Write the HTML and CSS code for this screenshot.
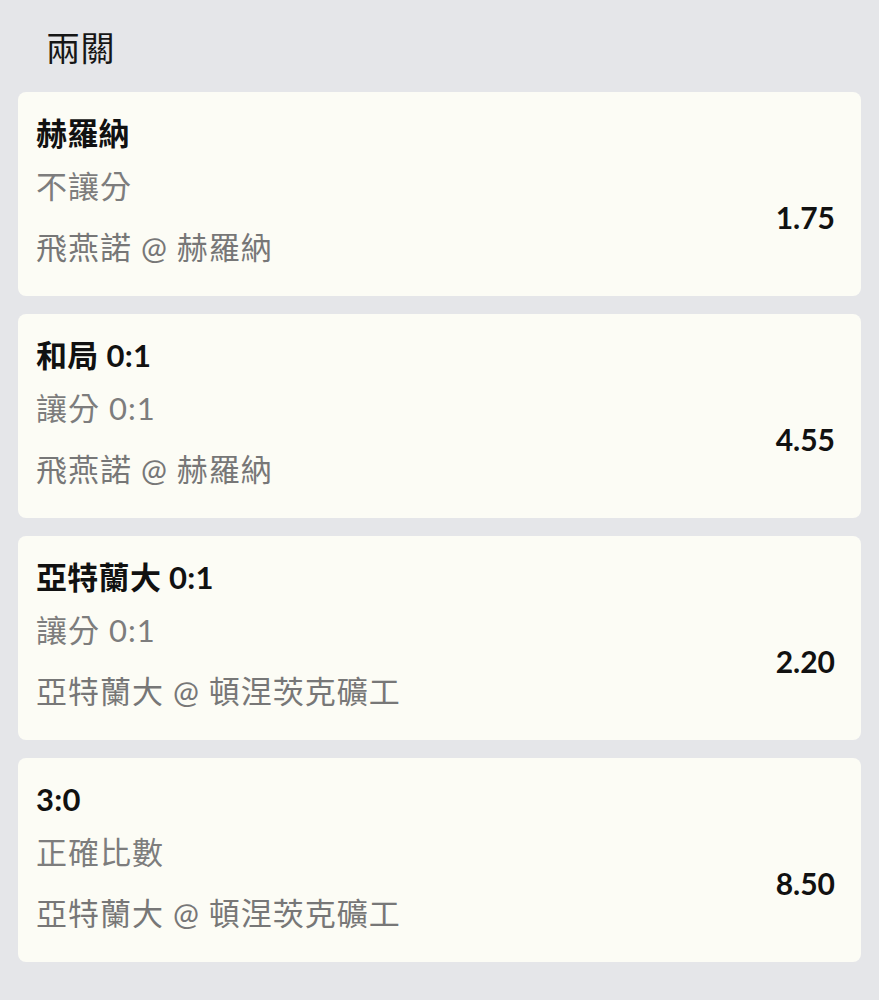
FILE: index.html
```html
<!DOCTYPE html>
<html lang="zh-Hant">
<head>
<meta charset="utf-8">
<title>兩關</title>
<link rel="stylesheet" href="styles.css">
</head>
<body>
<main class="page">
  <h1 class="page-title">兩關</h1>
  <ul class="bets">
    <li class="bet">
      <div class="bet-info">
        <div class="bet-pick">赫羅納</div>
        <div class="bet-market">不讓分</div>
        <div class="bet-match">飛燕諾 @ 赫羅納</div>
      </div>
      <div class="bet-odds">1.75</div>
    </li>
    <li class="bet">
      <div class="bet-info">
        <div class="bet-pick">和局 0:1</div>
        <div class="bet-market">讓分 0:1</div>
        <div class="bet-match">飛燕諾 @ 赫羅納</div>
      </div>
      <div class="bet-odds">4.55</div>
    </li>
    <li class="bet">
      <div class="bet-info">
        <div class="bet-pick">亞特蘭大 0:1</div>
        <div class="bet-market">讓分 0:1</div>
        <div class="bet-match">亞特蘭大 @ 頓涅茨克礦工</div>
      </div>
      <div class="bet-odds">2.20</div>
    </li>
    <li class="bet">
      <div class="bet-info">
        <div class="bet-pick">3:0</div>
        <div class="bet-market">正確比數</div>
        <div class="bet-match">亞特蘭大 @ 頓涅茨克礦工</div>
      </div>
      <div class="bet-odds">8.50</div>
    </li>
  </ul>
</main>
</body>
</html>
```
FILE: styles.css
```css
html, body {
  margin: 0;
  padding: 0;
  background: #e5e6e9;
}

body {
  font-family: "Lato", "Noto Sans CJK TC", sans-serif;
  color: #111111;
}

.page {
  padding: 0 18px;
}

.page-title {
  margin: 0;
  padding: 18px 0 14px 28px;
  font-size: 34px;
  font-weight: 400;
  line-height: 60px;
  letter-spacing: 0.5px;
  color: #161616;
}

.bets {
  list-style: none;
  margin: 0;
  padding: 0;
  display: flex;
  flex-direction: column;
  gap: 18px;
}

.bet {
  display: flex;
  align-items: center;
  justify-content: space-between;
  background: #fcfcf5;
  border-radius: 8px;
  padding: 18px 26px 18px 18px;
  font-size: 31px;
}

.bet-info {
  display: flex;
  flex-direction: column;
}

.bet-pick {
  font-weight: 700;
  line-height: 46px;
  letter-spacing: 0.3px;
  color: #111111;
}

.bet-market {
  line-height: 60px;
  letter-spacing: 1px;
  color: #7d7d7d;
}

.bet-match {
  line-height: 62px;
  letter-spacing: 1px;
  color: #777777;
}

.bet-odds {
  margin-top: 46px;
  font-weight: 700;
  font-size: 30px;
  line-height: 40px;
  color: #111111;
}
```
